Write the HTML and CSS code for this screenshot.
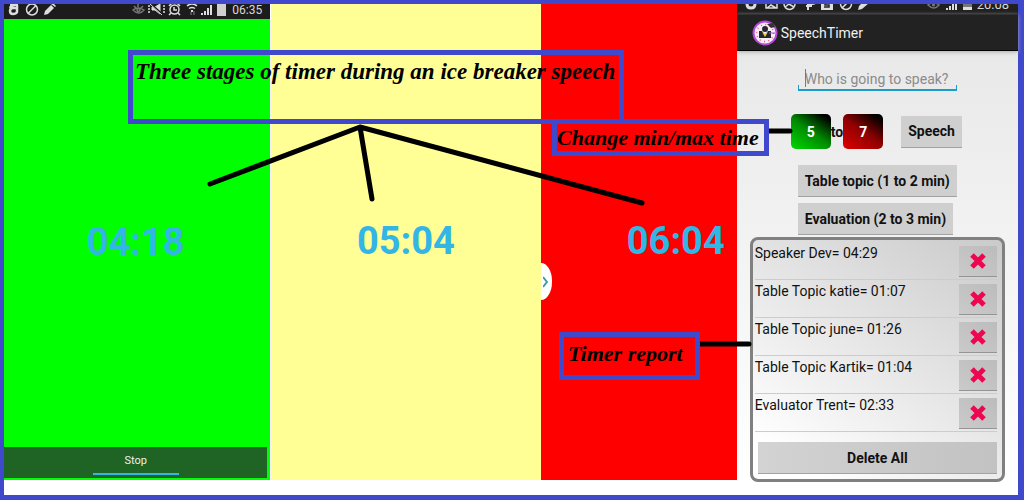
FILE: index.html
```html
<!DOCTYPE html>
<html lang="en">
<head>
<meta charset="utf-8">
<title>SpeechTimer</title>
<link rel="stylesheet" href="styles.css">
</head>
<body>
<main class="board">
  <section class="stage stage-green">
    <div class="status">
      <svg class="status-icons" width="54" height="16" viewBox="0 0 54 16" fill="none" stroke="#dedede" stroke-width="2">
        <path d="M6 1h8" stroke-width="2"/><path d="M6 4q1-3 5-3M13 1v7q-1 2-4 2q-3 0-3-3q0-3 3-3h3" stroke-width="2.500"/>
        <circle cx="28" cy="5.500" r="5.500" stroke-width="1.500"/><path d="M24 9.500l8-8" stroke-width="1.500"/>
        <path d="M40 11l1-4 6-6 3 3-6 6z" fill="#dedede" stroke="none"/><path d="M47 0l2-1 3 3-1 1z" fill="#dedede" stroke="none"/>
      </svg>
      <svg class="status-icons" width="96" height="16" viewBox="0 0 96 16" fill="none" stroke="#dedede">
        <g stroke="#777" stroke-width="1.500"><path d="M1 6q5-4 11 0q-5 6-11 0zM2 2l2 2M6 0v3M11 2l-2 2"/><circle cx="6.500" cy="6" r="1.500"/></g>
        <path d="M20 3h3l5-3v10l-5-4h-3z" fill="#dedede"/><path d="M19 0l12 11" stroke="#1c1c1c" stroke-width="2"/><path d="M18 0l12 11" stroke-width="1"/><path d="M17 1v9M32 1v9" stroke-dasharray="2 1" stroke-width="1.500"/>
        <circle cx="42.500" cy="5.500" r="4.500" stroke-width="1.500"/><path d="M42 3v3h3M37 2l3-3M48 2l-3-3M39 9l-2 2M46 9l2 2" stroke-width="1.500"/>
        <path d="M55 2q5-4 10 0M57 4.500q3-2 6 0" stroke-width="1.500"/><path d="M59 6h2v2h-2z" fill="#dedede" stroke="none"/><path d="M59 11V8M62 7v4" stroke="#888"/>
        <path d="M70 11V9M73 11V7M76 11V4M79 11V1" stroke-width="2"/>
        <path d="M85 0h9v12h-9z" fill="#cfcfcf" stroke="none"/>
      </svg>
      <span class="clock">06:35</span>
    </div>
    <div class="time">04:18</div>
    <button class="stop" type="button"><span class="stop-label">Stop</span></button>
  </section>

  <section class="stage stage-yellow"><div class="time">05:04</div></section>

  <section class="stage stage-red">
    <div class="time">06:04</div>
    <button class="drawer" type="button" aria-label="Open drawer">
      <svg width="5" height="12" viewBox="0 0 5 12" fill="none" stroke="#3d98ad" stroke-width="2"><path d="M0 1l4 5-4 5"/></svg>
    </button>
  </section>

  <section class="phone">
    <div class="status status-cut">
      <svg class="status-icons" width="134" height="12" viewBox="0 0 134 12" fill="none" stroke="#dedede" stroke-width="2">
        <path d="M10 0q0 4 4 4t4-4" stroke-width="3"/>
        <path d="M29-1v5h11v-5M30 4l4-3 5 3" stroke-width="1.500"/>
        <circle cx="52.500" cy="0" r="5.500" stroke-width="1.500"/><path d="M52 0l-4 3M52 0l5 3" stroke-width="1.500"/>
        <path d="M71 6V0h4q3 0 4-2M69 2h6"/>
        <path d="M84-1h12v7H84z" fill="#dedede" stroke="none"/><path d="M93-1h-5v2h4v2h-5" stroke="#222" stroke-width="1.500"/>
        <circle cx="109" cy="0" r="5.500" stroke-width="1.500"/><path d="M105 4l7-7" stroke-width="1.500"/>
        <path d="M121 6l1-4 6-6 4 3-7 6z" fill="#dedede" stroke="none"/>
      </svg>
      <svg class="status-icons" width="46" height="12" viewBox="0 0 46 12" fill="none" stroke="#dedede">
        <path d="M1 1q5-5 11 0q-5 6-11 0z" stroke="#777" stroke-width="1.500"/><circle cx="6.500" cy="1" r="1.500" fill="#777" stroke="none"/>
        <path d="M20 6V4M23 6V2M26 6V-1M29 6V-3" stroke-width="2"/>
        <path d="M36-2h9v5h-9z" fill="#777" stroke="none"/><path d="M36 3h9v3h-9z" fill="#dedede" stroke="none"/>
      </svg>
      <span class="clock">20:08</span>
    </div>
    <header class="app-bar">
      <svg width="26" height="26" viewBox="0 0 26 26">
        <circle cx="13" cy="13" r="11.500" fill="#f6eef5" stroke="#b648d8" stroke-width="2"/>
        <circle cx="13" cy="13" r="8.500" fill="none" stroke="#e45c70" stroke-width="1.500" stroke-dasharray="1 3.450"/>
        <path d="M7 11h3l3 4 3-4h3v7H7z" fill="#292431"/><circle cx="13" cy="9" r="3" fill="#292431"/>
        <path d="M10 12l3 5 3-5-3 2z" fill="#e8d233"/><path d="M15 4l6-1 2 4-4 1z" fill="#34303a"/><path d="M17 13h6" stroke="#a855c8"/>
      </svg>
      <h1 class="app-title">SpeechTimer</h1>
    </header>
    <div class="form">
      <div class="field"><input class="speaker" type="text" aria-label="Speaker name" placeholder="Who is going to speak?"></div>
      <div class="range">
        <button class="limit limit-min" type="button">5</button><span>to</span><button class="limit limit-max" type="button">7</button>
        <button class="btn speech" type="button">Speech</button>
      </div>
      <button class="btn" type="button">Table topic (1 to 2 min)</button>
      <button class="btn" type="button">Evaluation (2 to 3 min)</button>
    </div>
    <div class="report">
      <ul class="rows">
        <li class="row"><span>Speaker Dev= 04:29</span><button class="remove" type="button" aria-label="Delete Speaker Dev"><svg width="16" height="16" viewBox="0 0 16 16"><path d="M2 2l12 12M14 2L2 14" stroke="#ed0750" stroke-width="5"/></svg></button></li>
        <li class="row"><span>Table Topic katie= 01:07</span><button class="remove" type="button" aria-label="Delete katie"><svg width="16" height="16" viewBox="0 0 16 16"><path d="M2 2l12 12M14 2L2 14" stroke="#ed0750" stroke-width="5"/></svg></button></li>
        <li class="row"><span>Table Topic june= 01:26</span><button class="remove" type="button" aria-label="Delete june"><svg width="16" height="16" viewBox="0 0 16 16"><path d="M2 2l12 12M14 2L2 14" stroke="#ed0750" stroke-width="5"/></svg></button></li>
        <li class="row"><span>Table Topic Kartik= 01:04</span><button class="remove" type="button" aria-label="Delete Kartik"><svg width="16" height="16" viewBox="0 0 16 16"><path d="M2 2l12 12M14 2L2 14" stroke="#ed0750" stroke-width="5"/></svg></button></li>
        <li class="row"><span>Evaluator Trent= 02:33</span><button class="remove" type="button" aria-label="Delete Trent"><svg width="16" height="16" viewBox="0 0 16 16"><path d="M2 2l12 12M14 2L2 14" stroke="#ed0750" stroke-width="5"/></svg></button></li>
      </ul>
      <button class="btn delete-all" type="button">Delete All</button>
    </div>
  </section>

  <svg class="pointers" width="1024" height="500" viewBox="0 0 1024 500" fill="none" stroke="#000" stroke-width="5" stroke-linecap="round" stroke-linejoin="round">
    <path d="M210 184L360 127L642 203M360 127L372 199M769 131h21M699 344h50"/>
  </svg>
  <p class="note note-stages">Three stages of timer during an ice breaker speech</p>
  <p class="note note-range">Change min/max time</p>
  <p class="note note-report">Timer report</p>
</main>
</body>
</html>
```
FILE: styles.css
```css
* { box-sizing: border-box; }
body { margin: 0; background: #fff; font-family: Roboto, "Liberation Sans", sans-serif; color: #111; }
button, input { font: inherit; color: inherit; border: 0; border-radius: 0; padding: 0; margin: 0; }

.board {
  position: relative;
  display: grid;
  grid-template-columns: 266fr 270fr 196fr 281fr;
  min-height: 100vh;
  border: solid #4048cc;
  border-width: 4px 6px 5px 4px;
  padding-bottom: 15px;
}

.stage { position: relative; display: flex; flex-direction: column; }
.stage-green { background: #0f0; }
.stage-yellow { background: #ffff96; border-left: 1px solid #fff; }
.stage-red { background: #f00; }
.time { margin-top: 214px; color: #33b5e5; font-size: 38px; line-height: 46px; font-weight: 700; text-align: center; }
.stage-green .time { margin-top: 200px; padding-right: 3px; }
.stage-red .time { text-align: right; padding-right: 12px; }

.status { display: flex; align-items: flex-start; height: 15px; overflow: hidden; background: #1c1c1c; color: #d8d8d8; font-size: 12px; line-height: 12px; padding-right: 8px; }
.status-icons { flex: none; }
.status-icons + .status-icons { margin-left: auto; }
.clock { margin-left: 4px; }

.stop { display: flex; justify-content: center; align-items: flex-end; height: 31px; margin: auto 3px 2px 0; background: #1f6424; color: #eee; font-size: 11px; line-height: 16px; padding-bottom: 3px; }
.stop-label { width: 86px; height: 24px; padding-top: 2px; border-bottom: 2px solid #33b5e5; }

.drawer { position: absolute; left: 0; top: 259px; width: 11px; height: 37px; padding-left: 2px; background: #fff; border-radius: 0 11px 11px 0 / 0 18px 18px 0; display: flex; align-items: center; }

.phone { background: linear-gradient(#e6e6e6, #fff); }
.status-cut { height: 10px; padding-right: 9px; font-size: 13px; line-height: 1px; background: #202020; }
.app-bar { display: flex; align-items: center; gap: 3px; height: 37px; padding: 0 15px; background: #222; border-top: 1px solid #333; border-bottom: 1px solid #000; color: #f0f0f0; box-shadow: 0 1px 4px #aaa; }
.app-title { margin: 0; font-size: 14px; font-weight: 400; }

.form { display: flex; flex-direction: column; align-items: flex-start; gap: 6px; padding: 17px 20px 0 61px; }
.field { display: flex; border: solid #1c9dc9; border-width: 0 1px 2px; border-image: linear-gradient(transparent 80%, #1c9dc9 80%) 1; width: 159px; }
.speaker { width: 100%; height: 21px; padding-left: 6px; background: linear-gradient(#1c9dc9, #1c9dc9) 6px 1px / 1px 18px no-repeat; font-size: 14px; outline: 0; }
.speaker::placeholder { color: #8b8b8b; }
.range { display: flex; align-items: center; margin: 17px 0 10px -7px; font-size: 14px; font-weight: 700; }
.limit { width: 40px; height: 35px; border-radius: 5px; color: #fff; font-weight: 700; }
.limit-min { background: linear-gradient(35deg, #00d800, #008a00 50%, #000 90%); }
.limit-max { background: linear-gradient(35deg, #e00000, #900000 50%, #000 90%); }
.btn { height: 32px; padding: 0 7px; background: #cfcfcf; border-bottom: 1px solid #a3a3a3; font-size: 14px; font-weight: 700; }
.speech { margin-left: 18px; }

.report { margin: 2px 13px -2px; padding: 2px 5px 5px 2px; border: 3px solid #808080; border-radius: 8px; background: linear-gradient(35deg, #fff 10%, #cacaca); }
.rows { list-style: none; margin: 0; padding: 0; font-size: 14px; line-height: 18px; }
.row { display: flex; justify-content: space-between; height: 38px; border-bottom: 1px solid #ccc; padding-top: 2px; }
.remove { display: grid; place-items: center; width: 38px; height: 31px; margin-top: 2px; background: linear-gradient(35deg, #cacaca, #bcbcbc); border-bottom: 1px solid #949494; }
.delete-all { display: block; width: calc(100% - 3px); margin: 10px 0 0 3px; background: linear-gradient(90deg, #d3d3d3, #c2c2c2); }

.pointers { position: absolute; left: -4px; top: -4px; pointer-events: none; }
.note { position: absolute; margin: 0; border: 5px solid #4048cc; color: #000; font: italic 700 22px/28px "Liberation Serif", serif; white-space: nowrap; }
.note-stages { left: 124px; top: 46px; width: 496px; height: 74px; padding: 3px 2px; font-size: 23px; }
.note-range { left: 548px; top: 115px; width: 217px; height: 37px; }
.note-report { left: 555px; top: 328px; width: 141px; height: 48px; padding: 3px 4px; }
```
